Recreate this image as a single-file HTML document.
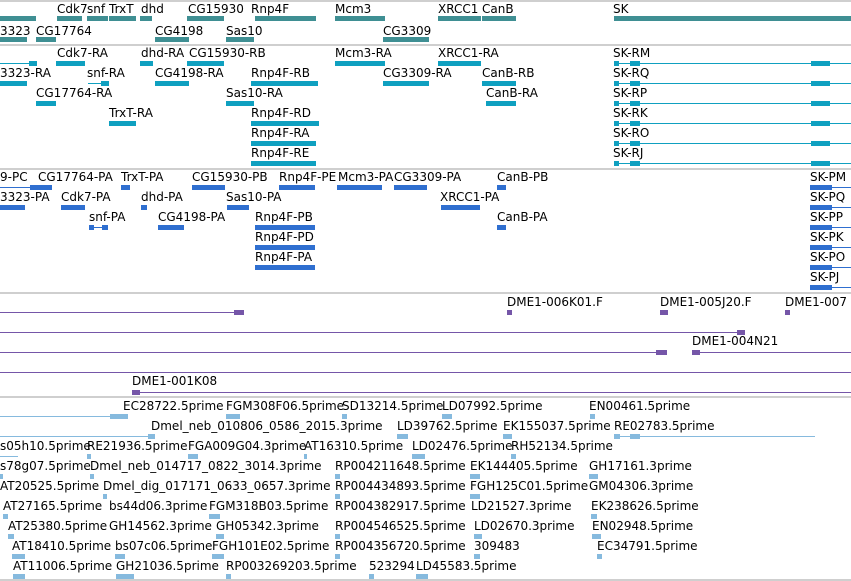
<!DOCTYPE html>
<html><head><meta charset="utf-8"><style>
body{margin:0;width:851px;height:581px;overflow:hidden;background:#fff;position:relative;font-family:"DejaVu Sans","Liberation Sans",sans-serif}
div{position:absolute}
.t{font-size:12px;line-height:14px;white-space:nowrap;color:#000}
.s{left:0;width:851px;height:2px;background:#cfcfcf}
.g{background:#3f8f93;height:5px}
.r{background:#0fa0c0;height:5px}
.p{background:#2f6fd0;height:5px}
.v{background:#7556a8;height:5px}
.e{background:#86bade;height:5px}
.l{height:1px!important}
</style></head><body>
<div class="s" style="top:0"></div>
<div class="s" style="top:44px"></div>
<div class="s" style="top:168px"></div>
<div class="s" style="top:292px"></div>
<div class="s" style="top:396px"></div>
<div class="s" style="top:579px"></div>

<!-- track 1 -->
<div class="t" style="top:2px;left:57px">Cdk7</div><div class="t" style="top:2px;left:87px">snf</div><div class="t" style="top:2px;left:109px">TrxT</div><div class="t" style="top:2px;left:141px">dhd</div><div class="t" style="top:2px;left:188px">CG15930</div><div class="t" style="top:2px;left:251px">Rnp4F</div><div class="t" style="top:2px;left:335px">Mcm3</div><div class="t" style="top:2px;left:438px">XRCC1</div><div class="t" style="top:2px;left:482px">CanB</div><div class="t" style="top:2px;left:613px">SK</div>
<div class="g" style="top:16px;left:0;width:36px"></div><div class="g" style="top:16px;left:57px;width:25px"></div><div class="g" style="top:16px;left:87px;width:21px"></div><div class="g" style="top:16px;left:109px;width:27px"></div><div class="g" style="top:16px;left:140px;width:12px"></div><div class="g" style="top:16px;left:187px;width:37px"></div><div class="g" style="top:16px;left:255px;width:61px"></div><div class="g" style="top:16px;left:335px;width:50px"></div><div class="g" style="top:16px;left:438px;width:43px"></div><div class="g" style="top:16px;left:482px;width:34px"></div><div class="g" style="top:16px;left:614px;width:237px"></div>
<div class="t" style="top:24px;left:0">3323</div><div class="t" style="top:24px;left:36px">CG17764</div><div class="t" style="top:24px;left:155px">CG4198</div><div class="t" style="top:24px;left:226px">Sas10</div><div class="t" style="top:24px;left:383px">CG3309</div>
<div class="g" style="top:37px;left:0;width:27px"></div><div class="g" style="top:37px;left:36px;width:20px"></div><div class="g" style="top:37px;left:155px;width:34px"></div><div class="g" style="top:37px;left:226px;width:28px"></div><div class="g" style="top:37px;left:383px;width:46px"></div>

<!-- track 2 -->
<div class="t" style="top:46px;left:57px">Cdk7-RA</div><div class="t" style="top:46px;left:141px">dhd-RA</div><div class="t" style="top:46px;left:189px">CG15930-RB</div><div class="t" style="top:46px;left:335px">Mcm3-RA</div><div class="t" style="top:46px;left:438px">XRCC1-RA</div><div class="t" style="top:46px;left:613px">SK-RM</div>
<div class="r l" style="top:63px;left:0;width:37px"></div><div class="r" style="top:61px;left:29px;width:8px"></div><div class="r" style="top:61px;left:56px;width:29px"></div><div class="r" style="top:61px;left:140px;width:13px"></div><div class="r" style="top:61px;left:187px;width:37px"></div><div class="r" style="top:61px;left:335px;width:50px"></div><div class="r" style="top:61px;left:438px;width:43px"></div>
<div class="t" style="top:66px;left:0">3323-RA</div><div class="t" style="top:66px;left:87px">snf-RA</div><div class="t" style="top:66px;left:155px">CG4198-RA</div><div class="t" style="top:66px;left:251px">Rnp4F-RB</div><div class="t" style="top:66px;left:383px">CG3309-RA</div><div class="t" style="top:66px;left:482px">CanB-RB</div><div class="t" style="top:66px;left:613px">SK-RQ</div>
<div class="r" style="top:81px;left:0;width:27px"></div><div class="r l" style="top:83px;left:88px;width:20px"></div><div class="r" style="top:81px;left:101px;width:8px"></div><div class="r" style="top:81px;left:155px;width:34px"></div><div class="r" style="top:81px;left:251px;width:67px"></div><div class="r" style="top:81px;left:383px;width:46px"></div><div class="r" style="top:81px;left:482px;width:34px"></div>
<div class="t" style="top:86px;left:36px">CG17764-RA</div><div class="t" style="top:86px;left:226px">Sas10-RA</div><div class="t" style="top:86px;left:486px">CanB-RA</div><div class="t" style="top:86px;left:613px">SK-RP</div>
<div class="r" style="top:101px;left:36px;width:20px"></div><div class="r" style="top:101px;left:226px;width:28px"></div><div class="r" style="top:101px;left:486px;width:30px"></div>
<div class="t" style="top:106px;left:109px">TrxT-RA</div><div class="t" style="top:106px;left:251px">Rnp4F-RD</div><div class="t" style="top:106px;left:613px">SK-RK</div>
<div class="r" style="top:121px;left:109px;width:27px"></div><div class="r" style="top:121px;left:251px;width:68px"></div>
<div class="t" style="top:126px;left:251px">Rnp4F-RA</div><div class="t" style="top:126px;left:613px">SK-RO</div>
<div class="r" style="top:141px;left:251px;width:65px"></div>
<div class="t" style="top:146px;left:251px">Rnp4F-RE</div><div class="t" style="top:146px;left:613px">SK-RJ</div>
<div class="r" style="top:161px;left:251px;width:65px"></div>
<div class="r l" style="top:63px;left:614px;width:237px"></div><div class="r" style="top:61px;left:614px;width:5px"></div><div class="r" style="top:61px;left:630px;width:10px"></div><div class="r" style="top:61px;left:811px;width:19px"></div>
<div class="r l" style="top:83px;left:614px;width:237px"></div><div class="r" style="top:81px;left:614px;width:5px"></div><div class="r" style="top:81px;left:630px;width:10px"></div><div class="r" style="top:81px;left:811px;width:19px"></div>
<div class="r l" style="top:103px;left:614px;width:237px"></div><div class="r" style="top:101px;left:614px;width:5px"></div><div class="r" style="top:101px;left:630px;width:10px"></div><div class="r" style="top:101px;left:811px;width:19px"></div>
<div class="r l" style="top:123px;left:614px;width:237px"></div><div class="r" style="top:121px;left:614px;width:5px"></div><div class="r" style="top:121px;left:630px;width:10px"></div><div class="r" style="top:121px;left:811px;width:19px"></div>
<div class="r l" style="top:143px;left:614px;width:237px"></div><div class="r" style="top:141px;left:614px;width:5px"></div><div class="r" style="top:141px;left:630px;width:10px"></div><div class="r" style="top:141px;left:811px;width:19px"></div>
<div class="r l" style="top:163px;left:614px;width:237px"></div><div class="r" style="top:161px;left:614px;width:5px"></div><div class="r" style="top:161px;left:630px;width:10px"></div><div class="r" style="top:161px;left:811px;width:19px"></div>

<!-- track 3 -->
<div class="t" style="top:170px;left:0">9-PC</div><div class="t" style="top:170px;left:38px">CG17764-PA</div><div class="t" style="top:170px;left:121px">TrxT-PA</div><div class="t" style="top:170px;left:192px">CG15930-PB</div><div class="t" style="top:170px;left:279px">Rnp4F-PE</div><div class="t" style="top:170px;left:338px">Mcm3-PA</div><div class="t" style="top:170px;left:394px">CG3309-PA</div><div class="t" style="top:170px;left:497px">CanB-PB</div><div class="t" style="top:170px;left:810px">SK-PM</div>
<div class="p l" style="top:187px;left:0;width:30px"></div><div class="p" style="top:185px;left:30px;width:7px"></div><div class="p" style="top:185px;left:37px;width:15px"></div><div class="p" style="top:185px;left:121px;width:9px"></div><div class="p" style="top:185px;left:192px;width:33px"></div><div class="p" style="top:185px;left:279px;width:36px"></div><div class="p" style="top:185px;left:337px;width:45px"></div><div class="p" style="top:185px;left:394px;width:33px"></div><div class="p" style="top:185px;left:497px;width:9px"></div>
<div class="t" style="top:190px;left:0">3323-PA</div><div class="t" style="top:190px;left:61px">Cdk7-PA</div><div class="t" style="top:190px;left:141px">dhd-PA</div><div class="t" style="top:190px;left:226px">Sas10-PA</div><div class="t" style="top:190px;left:440px">XRCC1-PA</div><div class="t" style="top:190px;left:810px">SK-PQ</div>
<div class="p" style="top:205px;left:0;width:25px"></div><div class="p" style="top:205px;left:61px;width:24px"></div><div class="p" style="top:205px;left:141px;width:6px"></div><div class="p" style="top:205px;left:227px;width:22px"></div><div class="p" style="top:205px;left:441px;width:39px"></div>
<div class="t" style="top:210px;left:89px">snf-PA</div><div class="t" style="top:210px;left:158px">CG4198-PA</div><div class="t" style="top:210px;left:255px">Rnp4F-PB</div><div class="t" style="top:210px;left:497px">CanB-PA</div><div class="t" style="top:210px;left:810px">SK-PP</div>
<div class="p" style="top:225px;left:89px;width:5px"></div><div class="p l" style="top:227px;left:89px;width:19px"></div><div class="p" style="top:225px;left:102px;width:6px"></div><div class="p" style="top:225px;left:158px;width:26px"></div><div class="p" style="top:225px;left:497px;width:9px"></div>
<div class="t" style="top:230px;left:255px">Rnp4F-PD</div><div class="t" style="top:230px;left:810px">SK-PK</div>
<div class="t" style="top:250px;left:255px">Rnp4F-PA</div><div class="t" style="top:250px;left:810px">SK-PO</div>
<div class="t" style="top:270px;left:810px">SK-PJ</div>
<div class="p" style="top:225px;left:255px;width:60px"></div><div class="p" style="top:245px;left:255px;width:60px"></div><div class="p" style="top:265px;left:255px;width:60px"></div>
<div class="p" style="top:185px;left:810px;width:22px"></div><div class="p l" style="top:187px;left:832px;width:19px"></div>
<div class="p" style="top:205px;left:810px;width:22px"></div><div class="p l" style="top:207px;left:832px;width:19px"></div>
<div class="p" style="top:225px;left:810px;width:22px"></div><div class="p l" style="top:227px;left:832px;width:19px"></div>
<div class="p" style="top:245px;left:810px;width:22px"></div><div class="p l" style="top:247px;left:832px;width:19px"></div>
<div class="p" style="top:265px;left:810px;width:22px"></div><div class="p l" style="top:267px;left:832px;width:19px"></div>
<div class="p" style="top:285px;left:810px;width:22px"></div><div class="p l" style="top:287px;left:832px;width:19px"></div>

<!-- track 4 -->
<div class="t" style="top:295px;left:507px">DME1-006K01.F</div><div class="t" style="top:295px;left:660px">DME1-005J20.F</div><div class="t" style="top:295px;left:785px">DME1-007</div>
<div class="v" style="top:310px;left:507px;width:5px"></div><div class="v" style="top:310px;left:660px;width:8px"></div><div class="v" style="top:310px;left:785px;width:5px"></div>
<div class="v l" style="top:312px;left:0;width:243px"></div><div class="v" style="top:310px;left:234px;width:10px"></div>
<div class="v l" style="top:332px;left:0;width:745px"></div><div class="v" style="top:330px;left:737px;width:8px"></div>
<div class="t" style="top:334px;left:692px">DME1-004N21</div>
<div class="v l" style="top:352px;left:0;width:667px"></div><div class="v" style="top:350px;left:656px;width:11px"></div><div class="v" style="top:350px;left:692px;width:8px"></div><div class="v l" style="top:352px;left:700px;width:151px"></div>
<div class="v l" style="top:372px;left:0;width:851px"></div>
<div class="t" style="top:374px;left:132px">DME1-001K08</div>
<div class="v" style="top:390px;left:132px;width:8px"></div><div class="v l" style="top:392px;left:140px;width:711px"></div>

<!-- track 5 -->
<div class="t" style="top:399px;left:123px">EC28722.5prime</div><div class="t" style="top:399px;left:226px">FGM308F06.5prime</div><div class="t" style="top:399px;left:342px">SD13214.5prime</div><div class="t" style="top:399px;left:442px">LD07992.5prime</div><div class="t" style="top:399px;left:589px">EN00461.5prime</div>
<div class="e l" style="top:416px;left:0;width:122px"></div><div class="e" style="top:414px;left:110px;width:18px"></div><div class="e" style="top:414px;left:226px;width:14px"></div><div class="e" style="top:414px;left:342px;width:5px"></div><div class="e" style="top:414px;left:442px;width:10px"></div><div class="e" style="top:414px;left:590px;width:5px"></div>
<div class="t" style="top:419px;left:151px">Dmel_neb_010806_0586_2015.3prime</div><div class="t" style="top:419px;left:397px">LD39762.5prime</div><div class="t" style="top:419px;left:503px">EK155037.5prime</div><div class="t" style="top:419px;left:614px">RE02783.5prime</div>
<div class="e l" style="top:436px;left:0;width:155px"></div><div class="e" style="top:434px;left:148px;width:7px"></div><div class="e" style="top:434px;left:397px;width:11px"></div><div class="e" style="top:434px;left:503px;width:9px"></div><div class="e l" style="top:436px;left:614px;width:201px"></div><div class="e" style="top:434px;left:614px;width:6px"></div><div class="e" style="top:434px;left:630px;width:10px"></div>
<div class="t" style="top:439px;left:0">s05h10.5prime</div><div class="t" style="top:439px;left:87px">RE21936.5prime</div><div class="t" style="top:439px;left:188px">FGA009G04.3prime</div><div class="t" style="top:439px;left:304px">AT16310.5prime</div><div class="t" style="top:439px;left:412px">LD02476.5prime</div><div class="t" style="top:439px;left:511px">RH52134.5prime</div>
<div class="e l" style="top:456px;left:0;width:18px"></div><div class="e" style="top:454px;left:87px;width:4px"></div><div class="e" style="top:454px;left:188px;width:10px"></div><div class="e" style="top:454px;left:304px;width:3px"></div><div class="e" style="top:454px;left:412px;width:13px"></div><div class="e" style="top:454px;left:511px;width:5px"></div>
<div class="t" style="top:459px;left:0">s78g07.5prime</div><div class="t" style="top:459px;left:90px">Dmel_neb_014717_0822_3014.3prime</div><div class="t" style="top:459px;left:335px">RP004211648.5prime</div><div class="t" style="top:459px;left:470px">EK144405.5prime</div><div class="t" style="top:459px;left:589px">GH17161.3prime</div>
<div class="e" style="top:474px;left:0;width:3px"></div><div class="e" style="top:474px;left:90px;width:4px"></div><div class="e" style="top:474px;left:335px;width:5px"></div><div class="e" style="top:474px;left:470px;width:10px"></div><div class="e" style="top:474px;left:589px;width:9px"></div>
<div class="t" style="top:479px;left:0">AT20525.5prime</div><div class="t" style="top:479px;left:103px">Dmel_dig_017171_0633_0657.3prime</div><div class="t" style="top:479px;left:335px">RP004434893.5prime</div><div class="t" style="top:479px;left:470px">FGH125C01.5prime</div><div class="t" style="top:479px;left:589px">GM04306.3prime</div>
<div class="e" style="top:494px;left:103px;width:4px"></div><div class="e" style="top:494px;left:335px;width:5px"></div><div class="e" style="top:494px;left:470px;width:10px"></div>
<div class="t" style="top:499px;left:3px">AT27165.5prime</div><div class="t" style="top:499px;left:109px">bs44d06.3prime</div><div class="t" style="top:499px;left:209px">FGM318B03.5prime</div><div class="t" style="top:499px;left:335px">RP004382917.5prime</div><div class="t" style="top:499px;left:471px">LD21527.3prime</div><div class="t" style="top:499px;left:591px">EK238626.5prime</div>
<div class="e" style="top:514px;left:3px;width:5px"></div><div class="e" style="top:514px;left:209px;width:11px"></div><div class="e" style="top:514px;left:591px;width:6px"></div>
<div class="t" style="top:519px;left:8px">AT25380.5prime</div><div class="t" style="top:519px;left:109px">GH14562.3prime</div><div class="t" style="top:519px;left:216px">GH05342.3prime</div><div class="t" style="top:519px;left:335px">RP004546525.5prime</div><div class="t" style="top:519px;left:474px">LD02670.3prime</div><div class="t" style="top:519px;left:592px">EN02948.5prime</div>
<div class="e" style="top:534px;left:8px;width:6px"></div><div class="e" style="top:534px;left:216px;width:8px"></div><div class="e" style="top:534px;left:335px;width:5px"></div><div class="e" style="top:534px;left:474px;width:8px"></div><div class="e" style="top:534px;left:592px;width:9px"></div>
<div class="t" style="top:539px;left:12px">AT18410.5prime</div><div class="t" style="top:539px;left:115px">bs07c06.5prime</div><div class="t" style="top:539px;left:212px">FGH101E02.5prime</div><div class="t" style="top:539px;left:335px">RP004356720.5prime</div><div class="t" style="top:539px;left:474px">309483</div><div class="t" style="top:539px;left:597px">EC34791.5prime</div>
<div class="e" style="top:554px;left:12px;width:13px"></div><div class="e" style="top:554px;left:115px;width:10px"></div><div class="e" style="top:554px;left:212px;width:12px"></div><div class="e" style="top:554px;left:335px;width:5px"></div><div class="e" style="top:554px;left:474px;width:6px"></div><div class="e" style="top:554px;left:597px;width:5px"></div>
<div class="t" style="top:559px;left:13px">AT11006.5prime</div><div class="t" style="top:559px;left:116px">GH21036.5prime</div><div class="t" style="top:559px;left:226px">RP003269203.5prime</div><div class="t" style="top:559px;left:369px">523294</div><div class="t" style="top:559px;left:416px">LD45583.5prime</div>
<div class="e" style="top:574px;left:13px;width:12px"></div><div class="e" style="top:574px;left:116px;width:18px"></div><div class="e" style="top:574px;left:226px;width:5px"></div><div class="e" style="top:574px;left:369px;width:5px"></div><div class="e" style="top:574px;left:416px;width:12px"></div>
</body></html>
